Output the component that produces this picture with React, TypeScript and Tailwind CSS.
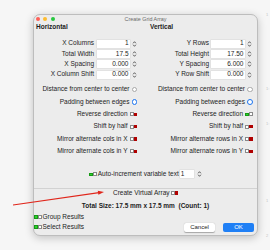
import React from "react";

const Stepper = () => (
  <svg width="5" height="8" viewBox="0 0 5 8" className="shrink-0">
    <path d="M1.1 3.3 L2.5 1.7 L3.9 3.3" fill="none" stroke="#444" strokeWidth="0.85" />
    <path d="M1.1 4.7 L2.5 6.3 L3.9 4.7" fill="none" stroke="#444" strokeWidth="0.85" />
  </svg>
);

function Check({ on }: { on: boolean }) {
  const box = <span className="w-[4px] h-[4px] bg-white border-[0.5px] border-[#8a8a8a] shrink-0" />;
  return on ? (
    <span className="flex items-center shrink-0">
      <span className="w-[3.5px] h-[3.5px] bg-[#2fd02f] border-[0.5px] border-[#169a16] shrink-0" />
      {box}
    </span>
  ) : (
    <span className="flex items-center shrink-0">
      {box}
      <span className="w-[3.5px] h-[3.5px] bg-[#b00000] shrink-0" />
    </span>
  );
}

function Radio({ on }: { on: boolean }) {
  return on ? (
    <span className="w-[5.5px] h-[5.5px] rounded-full bg-white border-[1.4px] border-[#1a73f0] shrink-0" />
  ) : (
    <span className="w-[5.5px] h-[5.5px] rounded-full bg-white border-[0.5px] border-[#a8a8a8] shrink-0" />
  );
}

function Field({ label, value, wide }: { label: string; value: string; wide?: boolean }) {
  return (
    <div className="flex items-center justify-end h-[10.3px]">
      <span className="whitespace-nowrap">{label}</span>
      <span
        className={
          wide
            ? "ml-[2px] w-[34px] h-[8px] bg-white flex items-center justify-end pr-[1.5px] shadow-[0_0_0_0.5px_#d8d8d8]"
            : "ml-[3px] w-[33px] h-[8px] bg-white flex items-center justify-end pr-[1.5px] shadow-[0_0_0_0.5px_#d8d8d8]"
        }
      >
        {value}
      </span>
      <span className="ml-[2px]">
        <Stepper />
      </span>
    </div>
  );
}

function OptRow({ label, control }: { label: string; control: React.ReactNode }) {
  return (
    <div className="flex items-center justify-end gap-[2px] h-[12.4px]">
      <span className="whitespace-nowrap">{label}</span>
      {control}
    </div>
  );
}

export default function App() {
  return (
    <div className="relative w-[270px] h-[250px] bg-[#f6f6f6] overflow-hidden flex items-start font-['Liberation_Sans',Arial,sans-serif] text-[6.5px] leading-none text-[#1c1c1c]">
      {/* Window */}
      <div className="ml-[33px] mt-[14px] w-[225px] h-[222px] box-border rounded-[7px] border-[0.5px] border-[#bdbdbd] bg-[#ececec] shadow-[0_2px_8px_rgba(0,0,0,0.22)] flex flex-col">
        {/* Title bar */}
        <div className="h-[7px] mt-[0.5px] grid grid-cols-[1fr_auto_1fr] items-center">
          <div className="flex items-center gap-[3.5px] ml-[1.5px]">
            <span className="w-[4px] h-[4px] rounded-full bg-[#fe5f57]" />
            <span className="w-[4px] h-[4px] rounded-full bg-[#febc2e]" />
            <span className="w-[4px] h-[4px] rounded-full bg-[#28c840]" />
          </div>
          <div className="text-[5.4px] text-[#6a6a6a] pt-[1.5px]">Create Grid Array</div>
          <div />
        </div>

        {/* Headers */}
        <div className="flex h-[8px] items-center font-bold pt-[1px]">
          <div className="w-[104px] pl-[2px]">Horizontal</div>
          <div className="pl-[12px]">Vertical</div>
        </div>

        {/* Fields */}
        <div className="flex mt-[8px]">
          <div className="w-[104px] flex flex-col pr-[1px]">
            <Field label="X Columns" value="1" />
            <Field label="Total Width" value="17.5" />
            <Field label="X Spacing" value="0.000" />
            <Field label="X Column Shift" value="0.000" />
          </div>
          <div className="w-[115px] flex flex-col pr-[1px]">
            <Field label="Y Rows" value="1" wide />
            <Field label="Total Height" value="17.50" wide />
            <Field label="Y Spacing" value="6.000" wide />
            <Field label="Y Row Shift" value="0.000" wide />
          </div>
        </div>

        {/* Options */}
        <div className="flex mt-[3.6px]">
          <div className="w-[104px] flex flex-col pr-[1px]">
            <OptRow label="Distance from center to center" control={<Radio on={false} />} />
            <OptRow label="Padding between edges" control={<Radio on />} />
            <OptRow label="Reverse direction" control={<Check on={false} />} />
            <OptRow label="Shift by half" control={<Check on={false} />} />
            <OptRow label="Mirror alternate cols in X" control={<Check on={false} />} />
            <OptRow label="Mirror alternate cols in Y" control={<Check on={false} />} />
          </div>
          <div className="w-[115px] flex flex-col pr-[0.5px]">
            <OptRow label="Distance from center to center" control={<Radio on={false} />} />
            <OptRow label="Padding between edges" control={<Radio on />} />
            <OptRow label="Reverse direction" control={<Check on />} />
            <OptRow label="Shift by half" control={<Check on={false} />} />
            <OptRow label="Mirror alternate rows in X" control={<Check on={false} />} />
            <OptRow label="Mirror alternate rows in Y" control={<Check on={false} />} />
          </div>
        </div>

        {/* Auto-increment */}
        <div className="mt-[11.8px] h-[10px] flex items-center justify-center">
          <Check on />
          <span className="ml-[1px] whitespace-nowrap">Auto-increment variable text</span>
          <span className="ml-[1px] w-[14px] h-[8px] bg-white flex items-center pl-[1px] shadow-[0_0_0_0.5px_#d8d8d8]">1</span>
          <span className="ml-[3px]">
            <Stepper />
          </span>
        </div>

        {/* Separator */}
        <div className="mt-[9px] h-[0.75px] bg-[#d2d2d2]" />

        {/* Create Virtual Array */}
        <div className="h-[8px] flex items-center justify-center gap-[1px]">
          <span className="whitespace-nowrap">Create Virtual Array</span>
          <Check on={false} />
        </div>

        {/* Total Size */}
        <div className="mt-[5px] h-[8px] flex items-center justify-center font-bold whitespace-pre">
          Total Size: 17.5 mm x 17.5 mm  (Count: 1)
        </div>

        {/* Bottom */}
        <div className="mt-[2.7px] flex items-end justify-between">
          <div className="flex flex-col gap-[2px] pb-[1px]">
            <div className="h-[8px] flex items-center gap-[1px]">
              <Check on />
              <span>Group Results</span>
            </div>
            <div className="h-[8px] flex items-center gap-[1px]">
              <Check on />
              <span>Select Results</span>
            </div>
          </div>
          <div className="flex gap-[8px] mr-[3px]">
            <button className="w-[31px] h-[9px] rounded-[2px] bg-white shadow-[0_0.5px_1px_rgba(0,0,0,0.3)] text-[6px] text-[#222] flex items-center justify-center">
              Cancel
            </button>
            <button className="w-[31px] h-[9px] rounded-[2px] bg-[#1f7ff5] text-[6px] text-white flex items-center justify-center">
              OK
            </button>
          </div>
        </div>
      </div>

      {/* faint marks at right */}
      <div className="w-[12px] flex flex-col pl-[8px] text-[4px] text-[#c4c4c4]">
        <span className="mt-[13px]">1</span>
        <span className="mt-[70px]">1:</span>
        <span className="mt-[31px]">1:</span>
        <span className="mt-[73px]">1</span>
        <span className="mt-[31px]">2</span>
      </div>

      {/* Red annotation arrow */}
      <svg className="absolute left-0 top-0 pointer-events-none" width="270" height="250" viewBox="0 0 270 250">
        <line x1="13" y1="205" x2="99" y2="192.6" stroke="#e0261b" strokeWidth="1.1" />
        <polygon points="104,192 97.8,190.8 98.4,194.8" fill="#e0261b" />
      </svg>
    </div>
  );
}
